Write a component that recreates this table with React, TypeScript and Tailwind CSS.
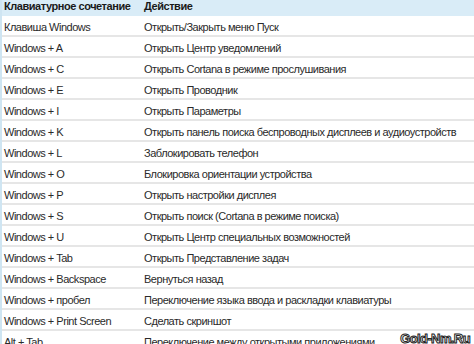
import React from 'react';

const rows: [string, string][] = [
  ['Клавиша Windows', 'Открыть/Закрыть меню Пуск'],
  ['Windows + A', 'Открыть Центр уведомлений'],
  ['Windows + C', 'Открыть Cortana в режиме прослушивания'],
  ['Windows + E', 'Открыть Проводник'],
  ['Windows + I', 'Открыть Параметры'],
  ['Windows + K', 'Открыть панель поиска беспроводных дисплеев и аудиоустройств'],
  ['Windows + L', 'Заблокировать телефон'],
  ['Windows + O', 'Блокировка ориентации устройства'],
  ['Windows + P', 'Открыть настройки дисплея'],
  ['Windows + S', 'Открыть поиск (Cortana в режиме поиска)'],
  ['Windows + U', 'Открыть Центр специальных возможностей'],
  ['Windows + Tab', 'Открыть Представление задач'],
  ['Windows + Backspace', 'Вернуться назад'],
  ['Windows + пробел', 'Переключение языка ввода и раскладки клавиатуры'],
  ['Windows + Print Screen', 'Сделать скриншот'],
  ['Alt + Tab', 'Переключение между открытыми приложениями'],
];

export default function App() {
  return (
    <div
      className="relative w-[474px] h-[344px] overflow-hidden bg-white border-l-2 border-[#cfe5f2] text-[#2a2a2a]"
      style={{ fontFamily: '"Liberation Sans", Arial, sans-serif' }}
    >
      <div className="grid grid-cols-[140px_1fr] h-[16px] bg-[#d9ecf7] text-[11px] font-bold text-[#1a1a1a] leading-[13px] tracking-[-0.45px]">
        <div className="pl-[2px] whitespace-nowrap">Клавиатурное сочетание</div>
        <div className="pl-[2px] whitespace-nowrap">Действие</div>
      </div>
      {rows.map(([keys, action], i) => (
        <div
          key={i}
          className="grid grid-cols-[140px_1fr] h-[21px] pt-[2px] border-b-2 border-[#e6e6e6] text-[11px] leading-[19px] tracking-[-0.48px]"
        >
          <div className="pl-[2px] whitespace-nowrap">{keys}</div>
          <div className="pl-[2px] whitespace-nowrap">{action}</div>
        </div>
      ))}
      <div className="absolute right-[4px] bottom-[-4px] text-[13px] font-bold text-white tracking-[-0.6px] [-webkit-text-stroke:1px_#222]">
        Gold-Nm.Ru
      </div>
    </div>
  );
}
